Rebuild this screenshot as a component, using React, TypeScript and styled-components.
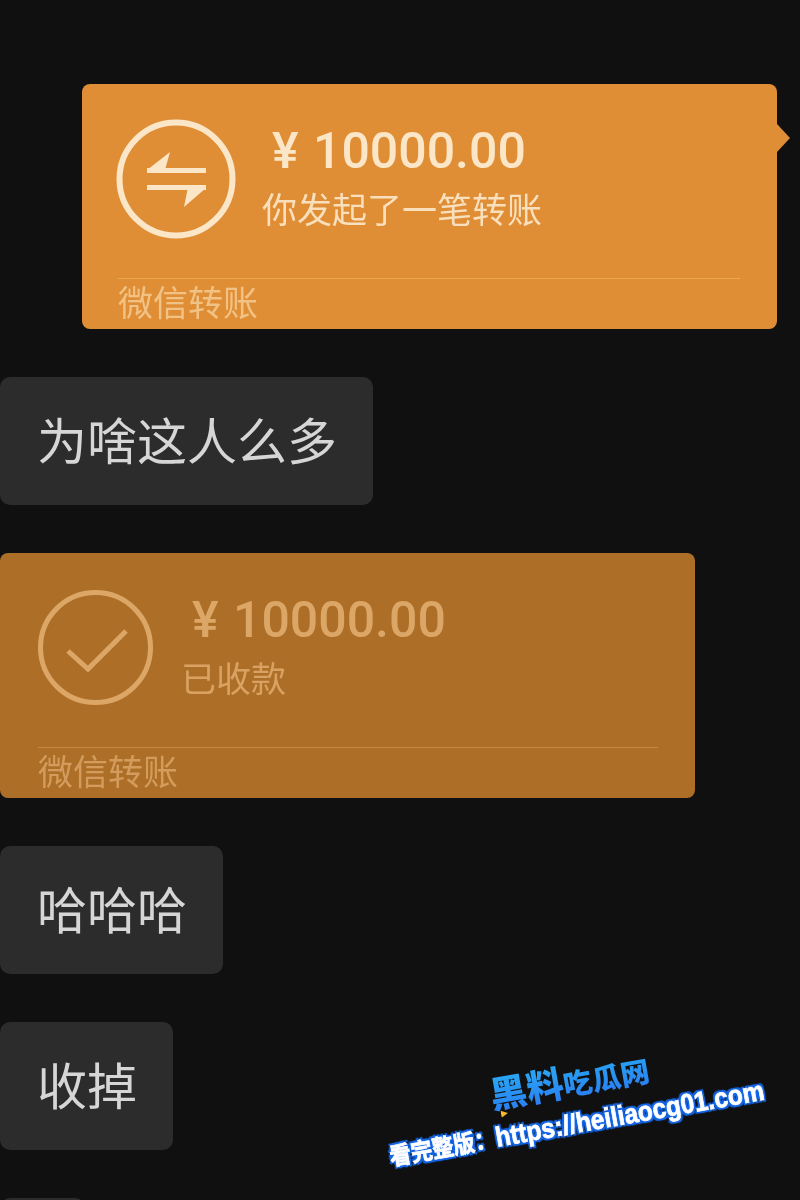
import React from 'react';
import styled, { createGlobalStyle } from 'styled-components';

const GlobalStyle = createGlobalStyle`
  html, body {
    margin: 0;
    padding: 0;
    background: #101010;
  }
`

type Tone = {
    bg: string
    fg: string
    note: string
    footer: string
    line: string
}

const sent: Tone = { bg: '#df8e36', fg: '#fbe6c8', note: '#f9dfbb', footer: '#f2c284', line: '#eba851' }
const received: Tone = { bg: '#ad6f27', fg: '#dca666', note: '#d9a262', footer: '#d39c5c', line: '#c58a42' }

type TransferCardProps = {
    tone: Tone
    note: string
    side: 'left' | 'right'
    icon: React.ReactNode
}

const TransferCard = (props: TransferCardProps) => {
    return (
        <Card $tone={props.tone} $side={props.side}>
            <CardBody $side={props.side}>
                {props.icon}
                <CardText>
                    <Amount $side={props.side}><Yen>¥</Yen>10000.00</Amount>
                    <Note $tone={props.tone}>{props.note}</Note>
                </CardText>
            </CardBody>
            <CardFooter $tone={props.tone}>微信转账</CardFooter>
        </Card>
    );
};

const TransferIcon = () => (
    <CardIcon $size={120} $top={0} viewBox="0 0 120 120">
        <circle cx="60" cy="60" r="56.5" fill="none" stroke="currentColor" strokeWidth="6"/>
        <path d="M31 49 H90 V54 H31 Z M31 51 L54 33 L49 51 Z M31 66 H90 V71 H31 Z M90 69 L68 88 L72 68 Z" fill="currentColor"/>
    </CardIcon>
);

const CheckIcon = () => (
    <CardIcon $size={115} $top={2} viewBox="0 0 115 115">
        <circle cx="57.5" cy="57.5" r="55" fill="none" stroke="currentColor" strokeWidth="5"/>
        <path d="M30 61 L50 79 L88 41" fill="none" stroke="currentColor" strokeWidth="5"/>
    </CardIcon>
);

const App = () => {
    return (
        <Screen>
            <GlobalStyle/>
            <Chat>
                <TransferCard tone={sent} side="right" note="你发起了一笔转账" icon={<TransferIcon/>}/>
                <Bubble>为啥这人么多</Bubble>
                <TransferCard tone={received} side="left" note="已收款" icon={<CheckIcon/>}/>
                <Bubble>哈哈哈</Bubble>
                <Bubble>收掉</Bubble>
                <Bubble>&nbsp;</Bubble>
            </Chat>
            <Watermark>
                <Logo>
                    <LogoText><LogoBig>黑料</LogoBig>吃瓜网</LogoText>
                    <LogoPlay viewBox="0 0 10 10"><path d="M0 0 L10 5 L0 10 Z" fill="#f5b82e"/></LogoPlay>
                </Logo>
                <SiteLine><SiteLabel>看完整版：</SiteLabel>https://heiliaocg01.com</SiteLine>
            </Watermark>
        </Screen>
    );
};

export default App;

const Screen = styled.div`
  position: relative;
  width: 800px;
  height: 1200px;
  overflow: hidden;
  background: #101010;
  font-family: Roboto, "Noto Sans CJK SC", sans-serif;
`

const Chat = styled.div`
  display: flex;
  flex-direction: column;
  align-items: flex-start;
  gap: 48px;
  padding-top: 84px;
  filter: blur(0.5px);
`

const Card = styled.div<{ $tone: Tone; $side: 'left' | 'right' }>`
  position: relative;
  width: 695px;
  height: 245px;
  box-sizing: border-box;
  display: flex;
  flex-direction: column;
  align-self: ${props => props.$side === 'right' ? 'flex-end' : 'flex-start'};
  margin-right: ${props => props.$side === 'right' ? '23px' : '0'};
  padding: 0 37px 0 ${props => props.$side === 'right' ? '36px' : '38px'};
  border-radius: 8px;
  background: ${props => props.$tone.bg};
  color: ${props => props.$tone.fg};

  ${props => props.$side === 'right' && `
    &::after {
      content: "";
      position: absolute;
      top: 40px;
      right: -13px;
      width: 0;
      height: 0;
      border-top: 14px solid transparent;
      border-bottom: 14px solid transparent;
      border-left: 13px solid ${props.$tone.bg};
    }
  `}
`

const CardBody = styled.div<{ $side: 'left' | 'right' }>`
  height: 194px;
  flex: none;
  box-sizing: border-box;
  display: flex;
  align-items: flex-start;
  gap: ${props => props.$side === 'right' ? '26px' : '28px'};
  padding-top: 35px;
  margin-left: ${props => props.$side === 'right' ? '-2px' : '0'};
`

const CardIcon = styled.svg<{ $size: number; $top: number }>`
  width: ${props => props.$size}px;
  height: ${props => props.$size}px;
  margin-top: ${props => props.$top}px;
  flex: none;
`

const CardText = styled.div`
  display: flex;
  flex-direction: column;
  gap: 10px;
  padding-top: 3px;
`

const Amount = styled.div<{ $side: 'left' | 'right' }>`
  font-size: 50px;
  font-weight: 500;
  line-height: 58px;
  padding-left: ${props => props.$side === 'right' ? '10px' : '11px'};
  white-space: nowrap;
`

const Yen = styled.span`
  display: inline-block;
  width: 41px;
  font-size: 50px;
`

const Note = styled.div<{ $tone: Tone }>`
  font-size: 35px;
  line-height: 44px;
  white-space: nowrap;
  color: ${props => props.$tone.note};
`

const CardFooter = styled.div<{ $tone: Tone }>`
  border-top: 1px solid ${props => props.$tone.line};
  padding-top: 3px;
  font-size: 35px;
  line-height: 46px;
  color: ${props => props.$tone.footer};
`

const Bubble = styled.div`
  height: 128px;
  box-sizing: border-box;
  display: flex;
  align-items: center;
  padding: 0 36px 7px 37px;
  border-radius: 10px;
  background: #2c2c2c;
  color: #d6d6d6;
  font-size: 50px;
  white-space: nowrap;
`

const Watermark = styled.div`
  position: absolute;
  left: 373px;
  top: 1062px;
  width: 400px;
  display: flex;
  flex-direction: column;
  align-items: center;
  gap: 1px;
  transform: rotate(-10deg);
  font-family: "Liberation Sans", "Noto Sans CJK SC", sans-serif;
  font-weight: 700;
`

const Logo = styled.div`
  position: relative;
`

const LogoText = styled.div`
  font-size: 29px;
  line-height: 42px;
  font-weight: 900;
  white-space: nowrap;
  background: linear-gradient(180deg, #29a8f5, #2a78f0);
  -webkit-background-clip: text;
  background-clip: text;
  color: transparent;
`

const LogoBig = styled.span`
  font-size: 37px;
`

const LogoPlay = styled.svg`
  position: absolute;
  left: 8px;
  bottom: 1px;
  width: 7px;
  height: 7px;
`

const SiteLine = styled.div`
  font-size: 24.5px;
  line-height: 34px;
  color: #ffffff;
  white-space: nowrap;
  transform: scaleY(1.12);
  -webkit-text-stroke: 0.7px #ffffff;
  text-shadow: 0 0 2px #1668e8, 2px 2px 1px #1668e8, -2px -2px 1px #1668e8, 2px -2px 1px #1668e8, -2px 2px 1px #1668e8;
`

const SiteLabel = styled.span`
  font-size: 21.5px;
`
